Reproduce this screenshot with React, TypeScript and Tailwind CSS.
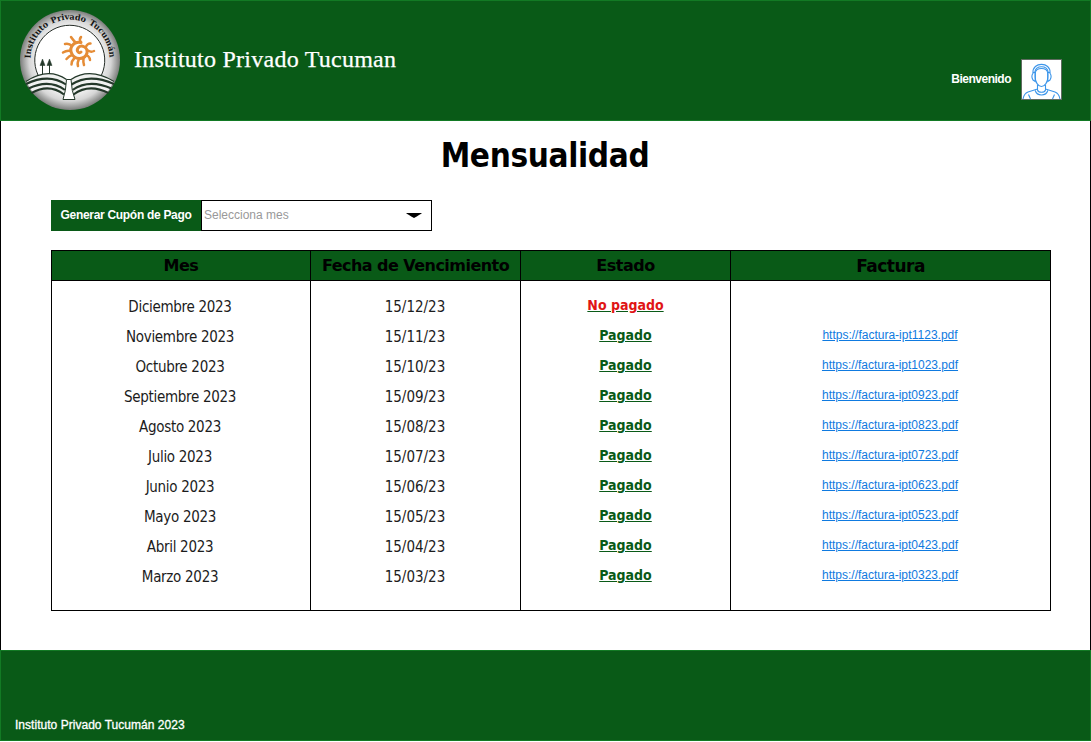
import React from "react";

const BODY = "font-['DejaVu_Sans_Condensed','DejaVu_Sans',sans-serif]";
const HEAD = "font-['DejaVu_Sans',sans-serif]";
const rows: [string, string, string][] = [
  ["Diciembre 2023", "15/12/23", ""],
  ["Noviembre 2023", "15/11/23", "https://factura-ipt1123.pdf"],
  ["Octubre 2023", "15/10/23", "https://factura-ipt1023.pdf"],
  ["Septiembre 2023", "15/09/23", "https://factura-ipt0923.pdf"],
  ["Agosto 2023", "15/08/23", "https://factura-ipt0823.pdf"],
  ["Julio 2023", "15/07/23", "https://factura-ipt0723.pdf"],
  ["Junio 2023", "15/06/23", "https://factura-ipt0623.pdf"],
  ["Mayo 2023", "15/05/23", "https://factura-ipt0523.pdf"],
  ["Abril 2023", "15/04/23", "https://factura-ipt0423.pdf"],
  ["Marzo 2023", "15/03/23", "https://factura-ipt0323.pdf"],
];

const headings = [
  { label: "Mes", style: "text-base tracking-[-0.5px]" },
  { label: "Fecha de Vencimiento", style: "text-base tracking-[-0.54px]" },
  { label: "Estado", style: "text-base tracking-[-0.5px]" },
  { label: "Factura", style: "text-[17px] tracking-[-0.5px]" },
];

function Logo() {
  return (
    <svg width="102" height="102" viewBox="0 0 102 102" className="block shrink-0">
      <defs>
        <radialGradient id="disc">
          <stop offset="0.6" stopColor="#fafafa" />
          <stop offset="0.82" stopColor="#d6d6d6" />
          <stop offset="1" stopColor="#7c7e7c" />
        </radialGradient>
        <path id="ring" d="M11.5 50 A39.5 39.5 0 0 1 90.5 50" />
      </defs>
      <circle cx="51" cy="51" r="50" fill="url(#disc)" />
      <path d="M19 66 A35 35 0 1 1 82.5 66 Q70 62 50 71 Q34 62 19 66Z" fill="#fff" />
      <path d="M19 66 A35 35 0 1 1 82.5 66" fill="none" stroke="#242b26" strokeWidth="1" />
      <text className="font-['DejaVu_Serif',serif] text-[8.2px] font-bold [word-spacing:1px]" fill="#151515">
        <textPath href="#ring" startOffset="0.5" textLength="122" lengthAdjust="spacing">Instituto Privado Tucumán</textPath>
      </text>
      <g stroke="#24382a" fill="#24382a">
        <path d="M23.5 54 V65 M30.5 54 V65" fill="none" strokeWidth="1" />
        <path d="M23.5 50 L26 56.5 H21Z M30.5 50 L33 56.5 H28Z" strokeWidth=".5" />
      </g>
      <path d="M7 72.5 Q28 58 47.5 70.5 H52 Q72 58 95 72.5 L88 84 Q71 73 55 86 L56 90.5 H44 L45 86 Q29 73 14 84Z" fill="#f1f2f1" />
      <g fill="none" stroke="#24382a">
        <path strokeWidth="1.3" d="M7 72.5 Q29 58 47.5 70.5 M52 70.5 Q71 58 95 72.5" />
        <path strokeWidth="2.1" d="M7 75 Q30 64 47 75.5 M9.5 79.5 Q30 69.5 46 81 M12.5 84 Q30 74 45 85.5 M52.5 75.5 Q70 64 95 75 M53.5 81 Q70 69.5 92.5 79.5 M54.5 85.5 Q70 74 89.5 84" />
        <path strokeWidth="1" fill="#fff" d="M47.5 70.5 H52 Q52.5 82 56 90.5 H44 Q47 82 47.5 70.5Z" />
      </g>
      <g fill="none" stroke="#e58c36" strokeLinecap="round" strokeLinejoin="round">
        <path strokeWidth="3" d="M62 33.5 C55 32 50 38 52.5 44 C55 51 66 51.5 68 44 C69 38 62 35 59 39 C57 42 60 45 62 43" />
        <path strokeWidth="2.5" d="M57 34 Q54 31 52 28 M61.5 33 Q60 30 62 28 M53 37 Q50 34 46 35 M51.5 42 Q48 41 44 43.5 M53 46 Q50 47 47.5 50 M55.5 49 Q52.5 52 52.5 55.5 M60 50 Q58 54 59 57 M64.5 49 Q64 53 65 56 M67.5 46 Q71 48 71 51 M69 41.5 Q72 43.5 75 42 M67 37.5 Q69 34 71.5 34.5" />
      </g>
    </svg>
  );
}

function Avatar() {
  return (
    <svg width="41" height="41" viewBox="0 0 41 41" className="block shrink-0">
      <rect x=".5" y=".5" width="40" height="40" fill="#fff" stroke="#5f6b60" />
      <g fill="none" stroke="#3b95ea" strokeWidth="1.1">
        <path d="M14.2 14 Q15 9.5 20.5 9.5 T26.8 14 V18 C26.8 23 24 27.5 20.5 27.5 S14.2 23 14.2 18Z" />
        <path d="M12 14 C11 2.5 30 2.5 29 14 M13.8 13 C15 6 26 6 27.2 13" />
        <path d="M12.5 13.5 Q9.5 17 12 21 L14.2 22.5 V13.5Z M28.5 13.5 Q31.5 17 29 21 L26.8 22.5 V13.5Z" />
        <path d="M16.5 26 V31 C17.5 34 23.5 34 24.5 31 V26 M14.2 31.5 C16 37.5 25 37.5 26.8 31.5 M16.5 30 L7 33 Q3 34.5 2 40 M24.5 30 L34 33 Q38 34.5 39 40 M7.5 35.5 L9.5 40 M33.5 35.5 L31.5 40" />
      </g>
    </svg>
  );
}

export default function App() {
  return (
    <div className="flex h-[742px] w-[1091px] flex-col bg-white font-['Liberation_Sans',Arial,sans-serif] text-black">
      <header className="flex h-[121px] items-start border border-[#127a24] bg-[#095a17] pr-7 pl-[18px] text-white">
        <div className="pt-2"><Logo /></div>
        <div className="pt-[42px] pl-[13px] font-['Liberation_Serif',serif] text-[24px] leading-8 tracking-[0.25px] whitespace-nowrap [-webkit-text-stroke:0.25px_white]">Instituto Privado Tucuman</div>
        <div className="flex-1" />
        <div className="pt-[70px] pr-[10px] text-xs leading-4 font-bold tracking-[-0.5px]">Bienvenido</div>
        <div className="pt-[58px]"><Avatar /></div>
      </header>
      <main className="h-[529px] border-x border-black px-[50px] pt-[13px]">
        <h1 className={`${BODY} pr-px text-center text-[33px] leading-[44px] font-bold tracking-[-0.35px]`}>Mensualidad</h1>
        <div className="mt-[22px] flex h-[31px] w-[381px]">
          <button className="w-[150px] bg-[#095a17] pb-0.5 text-xs font-bold tracking-[-0.3px] text-white">Generar Cupón de Pago</button>
          <div className="flex flex-1 items-center justify-between border border-black pr-[9px] pl-[2px] text-xs text-[#999]">
            <span className="pb-0.5">Selecciona mes</span>
            <svg width="16" height="5" viewBox="0 0 16 5"><path d="M0 0H16Q14 1.5 8 5Q2 1.5 0 0Z" fill="#000" /></svg>
          </div>
        </div>
        <table className={`${BODY} mt-[19px] w-[1000px] table-fixed border-collapse`}>
          <colgroup><col className="w-[259px]" /><col className="w-[210px]" /><col className="w-[210px]" /><col className="w-[320px]" /></colgroup>
          <thead>
            <tr className={`${HEAD} h-[30px] bg-[#095a17]`}>
              {headings.map((h) => (
                <th key={h.label} className={`border border-black p-0 leading-5 whitespace-nowrap ${h.style}`}>{h.label}</th>
              ))}
            </tr>
          </thead>
          <tbody>
            <tr className="h-[330px] align-top">
              <td className="border border-black p-0 pt-[11px] pr-0.5 text-center text-[15px] tracking-[-0.3px] text-[#1c1c1c]">
                {rows.map((r) => <div key={r[0]} className="h-[30px] leading-[30px]">{r[0]}</div>)}
              </td>
              <td className="border border-black p-0 pt-[11px] pr-px text-center text-[15px] text-[#1c1c1c]">
                {rows.map((r) => <div key={r[0]} className="h-[30px] leading-[30px]">{r[1]}</div>)}
              </td>
              <td className="border border-black p-0 pt-[9px] text-center text-sm font-bold text-[#095a17] underline">
                {rows.map((r) => <div key={r[0]} className={r[2] ? "h-[30px] leading-[30px]" : "h-[30px] leading-[30px] text-[#e01515]"}>{r[2] ? "Pagado" : "No pagado"}</div>)}
              </td>
              <td className="border border-black p-0 pt-[9px] pr-px text-center font-['Liberation_Sans',Arial,sans-serif] text-xs text-[#0f7ae0] underline">
                {rows.map((r) => <div key={r[0]} className="h-[30px] leading-[30px]">{r[2]}</div>)}
              </td>
            </tr>
          </tbody>
        </table>
      </main>
      <footer className="h-[91px] border border-[#127a24] bg-[#095a17] pt-[66px] pl-[14px] text-xs leading-4 tracking-[0.03px] text-white [-webkit-text-stroke:0.3px_white]">Instituto Privado Tucumán 2023</footer>
    </div>
  );
}
